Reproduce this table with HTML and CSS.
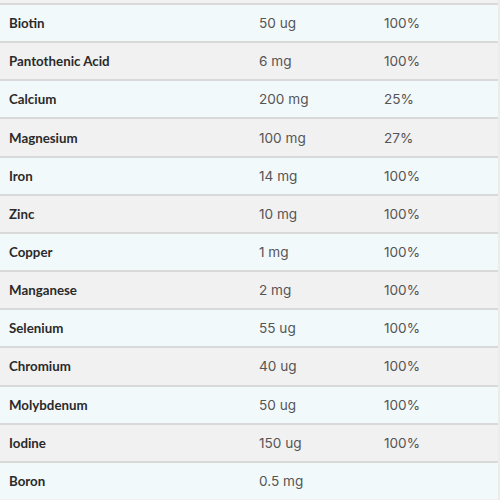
FILE: index.html
```html
<!DOCTYPE html>
<html>
<head>
<meta charset="utf-8">
<link rel="stylesheet" href="styles.css">
</head>
<body>
<div class="page">
  <div class="table">
    <div class="row odd"><div class="name">Biotin</div><div class="amt">50 ug</div><div class="pct">100%</div></div>
    <div class="row even"><div class="name">Pantothenic Acid</div><div class="amt">6 mg</div><div class="pct">100%</div></div>
    <div class="row odd"><div class="name">Calcium</div><div class="amt">200 mg</div><div class="pct">25%</div></div>
    <div class="row even"><div class="name">Magnesium</div><div class="amt">100 mg</div><div class="pct">27%</div></div>
    <div class="row odd"><div class="name">Iron</div><div class="amt">14 mg</div><div class="pct">100%</div></div>
    <div class="row even"><div class="name">Zinc</div><div class="amt">10 mg</div><div class="pct">100%</div></div>
    <div class="row odd"><div class="name">Copper</div><div class="amt">1 mg</div><div class="pct">100%</div></div>
    <div class="row even"><div class="name">Manganese</div><div class="amt">2 mg</div><div class="pct">100%</div></div>
    <div class="row odd"><div class="name">Selenium</div><div class="amt">55 ug</div><div class="pct">100%</div></div>
    <div class="row even"><div class="name">Chromium</div><div class="amt">40 ug</div><div class="pct">100%</div></div>
    <div class="row odd"><div class="name">Molybdenum</div><div class="amt">50 ug</div><div class="pct">100%</div></div>
    <div class="row even"><div class="name">Iodine</div><div class="amt">150 ug</div><div class="pct">100%</div></div>
    <div class="row odd"><div class="name">Boron</div><div class="amt">0.5 mg</div><div class="pct"></div></div>
  </div>
</div>
</body>
</html>
```
FILE: styles.css
```css
html, body {
  margin: 0;
  padding: 0;
  background: #ececed;
}
.page {
  width: 498px;
  height: 500px;
  overflow: hidden;
  background: #f2f1f2;
  padding-top: 3px;
  box-sizing: border-box;
}
.table {
  display: flex;
  flex-direction: column;
}
.row {
  display: grid;
  grid-template-columns: 250px 125px 1fr;
  align-items: center;
  height: 38.17px;
  box-sizing: border-box;
  border-top: 2px solid #d9d9da;
  font-size: 13px;
}
.odd { background: #f2f9fb; }
.even { background: #f2f1f2; }
.name {
  padding-left: 9px;
  font-family: "Lato", "Liberation Sans", sans-serif;
  font-weight: 700;
  font-size: 13.3px;
  color: #2a2a2a;
}
.amt, .pct {
  padding-left: 9px;
  font-family: "Inter", "Liberation Sans", sans-serif;
  font-weight: 400;
  font-size: 13.6px;
  color: #555;
}
```
